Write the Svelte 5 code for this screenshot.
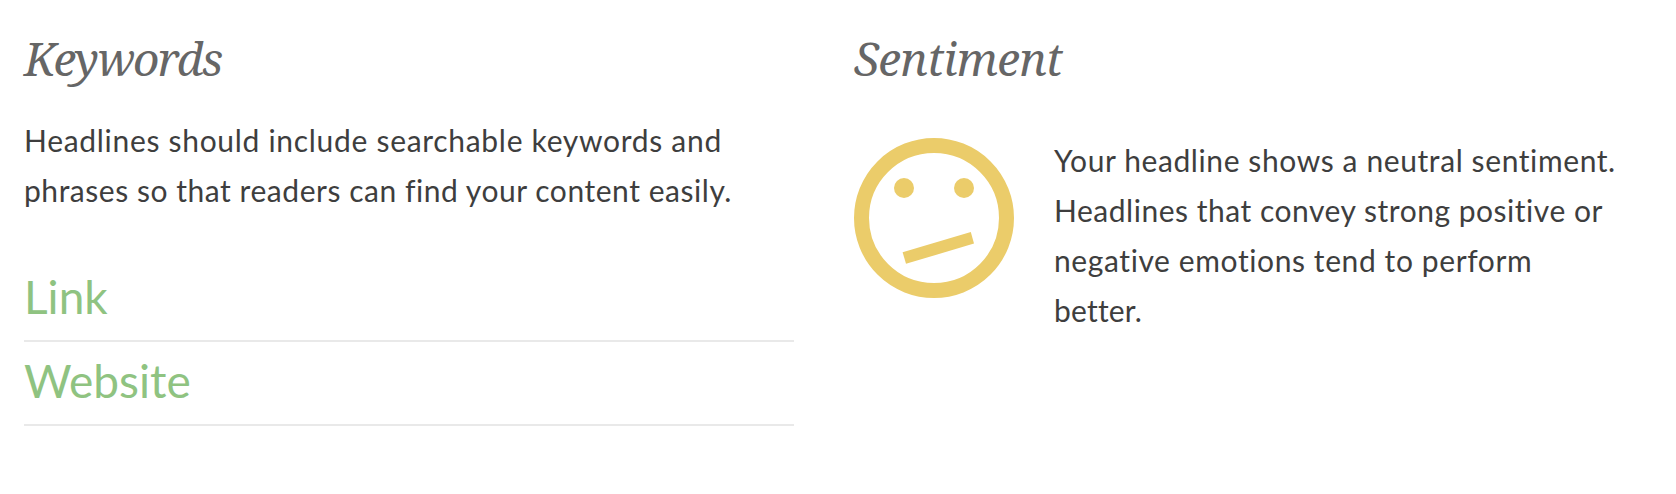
<style>

  :global(body) { background: #fff; }

  /* Two equal columns */
  .analysis {
    display: grid;
    grid-template-columns: 770px 1fr;
    column-gap: 60px;
    padding: 28px 32px 0 24px;
    font-family: Lato, "Open Sans", sans-serif;
    font-size: 30px;
    line-height: 50px;
    color: #3e3e3e;
  }

  h2 {
    margin: 0;
    font: italic 400 46px/60px "Noto Serif", "Liberation Serif", serif;
    letter-spacing: -1.7px;
    color: #666;
  }

  .sentiment h2 { letter-spacing: -0.7px; }

  p {
    margin: 0;
    white-space: nowrap;
    letter-spacing: 0.6px;
  }

  .line { display: block; }

  .keywords p { margin-top: 27px; }
  .keywords .line:first-child { letter-spacing: 0.7px; }
  .keywords .line:last-child { letter-spacing: 0.54px; }
  .sentiment .line:nth-child(2) { letter-spacing: 0.52px; }
  .sentiment .line:last-child { letter-spacing: 0.2px; }

  /* Keyword list */
  ul {
    margin: 43px 0 0;
    padding: 0;
    list-style: none;
  }

  li {
    padding-bottom: 4px;
    border-bottom: 2px solid #e9e9e9;
    font-size: 46px;
    line-height: 78px;
    color: #8fc381;
  }

  /* Face and its message */
  .mood {
    display: flex;
    align-items: flex-start;
    gap: 40px;
    margin-top: 47px;
  }

  .face {
    flex: none;
    width: 160px;
    height: 160px;
    margin-top: 3px;
    fill: #ebcc6a;
  }

  .face .ring {
    fill: none;
    stroke: #ebcc6a;
    stroke-width: 15;
  }

</style>

<script>

  const keywords = ['Link', 'Website']

  const advice = [
    'Headlines should include searchable keywords and',
    'phrases so that readers can find your content easily.'
  ]

  const message = [
    'Your headline shows a neutral sentiment.',
    'Headlines that convey strong positive or',
    'negative emotions tend to perform',
    'better.'
  ]

</script>

<main class="analysis">
  <section class="keywords">
    <h2>Keywords</h2>
    <p>
      {#each advice as line}
        <span class="line">{line}</span>
      {/each}
    </p>
    <ul>
      {#each keywords as word}
        <li>{word}</li>
      {/each}
    </ul>
  </section>

  <section class="sentiment">
    <h2>Sentiment</h2>
    <div class="mood">
      <!-- Neutral face -->
      <svg class="face" viewBox="0 0 160 160" aria-hidden="true">
        <circle class="ring" cx="80" cy="80" r="72.5" />
        <circle cx="50" cy="50" r="10" />
        <circle cx="110" cy="50" r="10" />
        <path d="M48.6 114.2 L116.8 94 L120 105.6 L52 125.8 z" />
      </svg>
      <p>
        {#each message as line}
          <span class="line">{line}</span>
        {/each}
      </p>
    </div>
  </section>
</main>
